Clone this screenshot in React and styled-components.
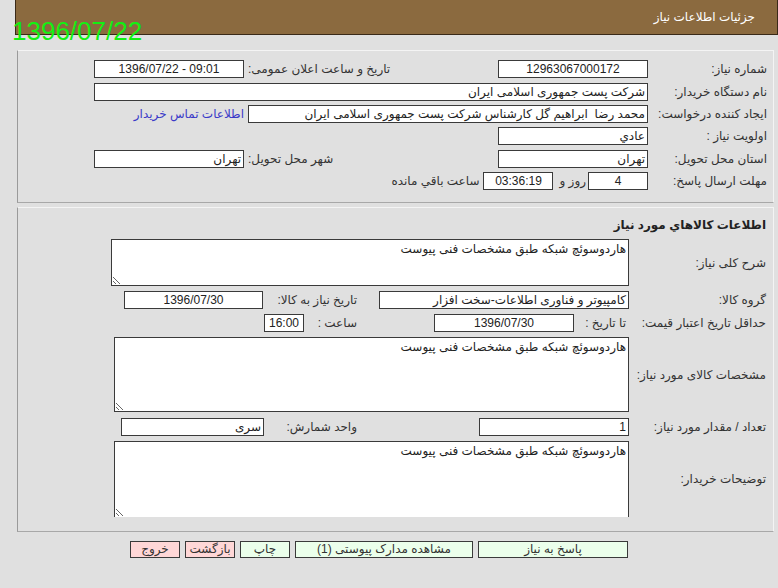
import React from "react";
import styled, { createGlobalStyle } from "styled-components";

const Global = createGlobalStyle`
  html, body { margin: 0; padding: 0; background: #e0e0e0; }
  body { font-family: "Liberation Sans", "DejaVu Sans", sans-serif; font-size: 12px; color: #333; }
`;

const Page = styled.div`
  position: relative;
  direction: rtl;
  width: 778px;
  height: 588px;
  overflow: hidden;
  background: #e0e0e0;
`;

const Stamp = styled.div`
  position: absolute;
  left: 12px;
  top: 16px;
  direction: ltr;
  font-family: "Liberation Sans", sans-serif;
  font-size: 26px;
  color: #12f012;
  z-index: 2;
`;

const Header = styled.div`
  height: 34px;
  margin-left: 15px;
  background: #8b6a3f;
  border-left: 1px solid #3a2a18;
  border-bottom: 1px solid #3a2a18;
  border-right: 1px solid #3a2a18;
  display: flex;
  align-items: center;
  padding-right: 22px;
`;

const Title = styled.div`
  color: #fff;
  font-size: 12px;
`;

const Panel = styled.div`
  margin: ${(p) => p.$mt}px 4px 0 17px;
  border-top: 1px solid #f4f4f4;
  border-left: 1px solid #9a9a9a;
  border-bottom: 1px solid #a8a8a8;
  border-right: 1px solid #f4f4f4;
  padding: ${(p) => p.$pad};
  display: flex;
  flex-direction: column;
`;

const Row = styled.div`
  display: flex;
  align-items: center;
  height: ${(p) => p.$h}px;
  margin-top: ${(p) => p.$mt || 0}px;
`;

const Label = styled.div`
  width: ${(p) => p.$w}px;
  flex: none;
  white-space: nowrap;
  color: #333;
`;

const Cell = styled.div`
  width: ${(p) => p.$w}px;
  flex: none;
  white-space: nowrap;
  text-align: ${(p) => p.$align || "right"};
  padding-right: ${(p) => p.$pr || 0}px;
  padding-left: ${(p) => p.$pl || 0}px;
  box-sizing: border-box;
  color: #333;
`;

const Text = styled.span`
  flex: none;
  white-space: nowrap;
  margin-right: ${(p) => p.$mr || 0}px;
  margin-left: ${(p) => p.$ml || 0}px;
  color: #333;
`;

const Field = styled.div`
  flex: none;
  box-sizing: border-box;
  width: ${(p) => p.$w}px;
  height: 18px;
  line-height: 16px;
  background: #fff;
  border: 1px solid #3a3a3a;
  padding: 0 2px;
  direction: ${(p) => (p.$ltr ? "ltr" : "rtl")};
  text-align: ${(p) => p.$align || "right"};
  white-space: pre;
  overflow: hidden;
  color: #222;
`;

const Link = styled.a`
  color: #3a3ac8;
  text-decoration: none;
  margin-right: 4px;
  white-space: nowrap;
`;

const Heading = styled.div`
  height: 31px;
  display: flex;
  align-items: center;
  padding-top: 3px;
  box-sizing: border-box;
  font-weight: bold;
  color: #222;
`;

const Area = styled.textarea`
  flex: none;
  box-sizing: border-box;
  width: ${(p) => p.$w}px;
  height: ${(p) => p.$h}px;
  background: #fff;
  border: 1px solid #3a3a3a;
  border-bottom: ${(p) => (p.$open ? "none" : "1px solid #3a3a3a")};
  padding: 2px 2px;
  margin: 0;
  font-family: "Liberation Sans", "DejaVu Sans", sans-serif;
  font-size: 12px;
  color: #222;
  direction: rtl;
  outline: none;
`;

const ButtonBar = styled.div`
  display: flex;
  gap: 5px;
  margin-top: 9px;
  padding-right: 150px;
`;

const Button = styled.button`
  box-sizing: border-box;
  width: ${(p) => p.$w}px;
  height: 17px;
  padding: 0;
  border: 1px solid #3a3a3a;
  background: ${(p) => (p.$tone === "red" ? "#ffd7d7" : "#ebffeb")};
  font-family: "Liberation Sans", "DejaVu Sans", sans-serif;
  font-size: 12px;
  color: #333;
  line-height: 15px;
`;

const desc = "هاردوسوئچ شبکه طبق مشخصات فنی پیوست";

export default function App() {
  return (
    <>
      <Global />
      <Page>
        <Stamp>1396/07/22</Stamp>
        <Header>
          <Title>جزئیات اطلاعات نیاز</Title>
        </Header>

        <Panel $mt={15} $pad="7px 6px 10px 0">
          <Row $h={22}>
            <Label $w={119}>شماره نیاز:</Label>
            <Field $w={150} $align="center">12963067000172</Field>
            <Cell $w={254} $align="left" $pl={4}>تاریخ و ساعت اعلان عمومی:</Cell>
            <Field $w={150} $align="center" $ltr>1396/07/22 - 09:01</Field>
          </Row>
          <Row $h={23}>
            <Label $w={119}>نام دستگاه خریدار:</Label>
            <Field $w={554}>شرکت پست جمهوری اسلامی ایران</Field>
          </Row>
          <Row $h={22}>
            <Label $w={119}>ایجاد کننده درخواست:</Label>
            <Field $w={400}>محمد رضا  ابراهیم گل کارشناس شرکت پست جمهوری اسلامی ایران</Field>
            <Link href="#">اطلاعات تماس خریدار</Link>
          </Row>
          <Row $h={22}>
            <Label $w={119}>اولویت نیاز :</Label>
            <Field $w={150}>عادي</Field>
          </Row>
          <Row $h={23}>
            <Label $w={119}>استان محل تحویل:</Label>
            <Field $w={150}>تهران</Field>
            <Cell $w={254} $align="left" $pl={4}>شهر محل تحویل:</Cell>
            <Field $w={150}>تهران</Field>
          </Row>
          <Row $h={22}>
            <Label $w={119}>مهلت ارسال پاسخ:</Label>
            <Field $w={60} $align="center">4</Field>
            <Text $mr={2} $ml={6}>روز و</Text>
            <Field $w={70} $align="center">03:36:19</Field>
            <Text $mr={4}>ساعت باقي مانده</Text>
          </Row>
        </Panel>

        <Panel $mt={4} $pad="0 7px 14px 0">
          <Heading>اطلاعات کالاهاي مورد نیاز</Heading>
          <Row $h={47}>
            <Label $w={137}>شرح کلی نیاز:</Label>
            <Area $w={518} $h={47} readOnly defaultValue={desc} />
          </Row>
          <Row $h={18} $mt={5}>
            <Label $w={137}>گروه کالا:</Label>
            <Field $w={250}>کامپیوتر و فناوری اطلاعات-سخت افزار</Field>
            <Cell $w={116} $pr={22}>تاریخ نیاز به کالا:</Cell>
            <Field $w={139} $align="center">1396/07/30</Field>
          </Row>
          <Row $h={18} $mt={5}>
            <Label $w={137}>حداقل تاریخ اعتبار قیمت:</Label>
            <Cell $w={55} $pr={3}>تا تاریخ :</Cell>
            <Field $w={140} $align="center">1396/07/30</Field>
            <Cell $w={130} $pr={77}>ساعت :</Cell>
            <Field $w={40} $align="center">16:00</Field>
          </Row>
          <Row $h={75} $mt={5}>
            <Label $w={137}>مشخصات کالای مورد نیاز:</Label>
            <Area $w={515} $h={75} readOnly defaultValue={desc} />
          </Row>
          <Row $h={18} $mt={6}>
            <Label $w={137}>تعداد / مقدار مورد نیاز:</Label>
            <Field $w={150}>1</Field>
            <Cell $w={215} $pr={122}>واحد شمارش:</Cell>
            <Field $w={143}>سری</Field>
          </Row>
          <Row $h={76} $mt={5}>
            <Label $w={137}>توضیحات خریدار:</Label>
            <Area $w={515} $h={76} $open readOnly defaultValue={desc} />
          </Row>
        </Panel>

        <ButtonBar>
          <Button $w={150}>پاسخ به نیاز</Button>
          <Button $w={178}>مشاهده مدارک پیوستی (1)</Button>
          <Button $w={50}>چاپ</Button>
          <Button $w={50} $tone="red">بازگشت</Button>
          <Button $w={50} $tone="red">خروج</Button>
        </ButtonBar>
      </Page>
    </>
  );
}
